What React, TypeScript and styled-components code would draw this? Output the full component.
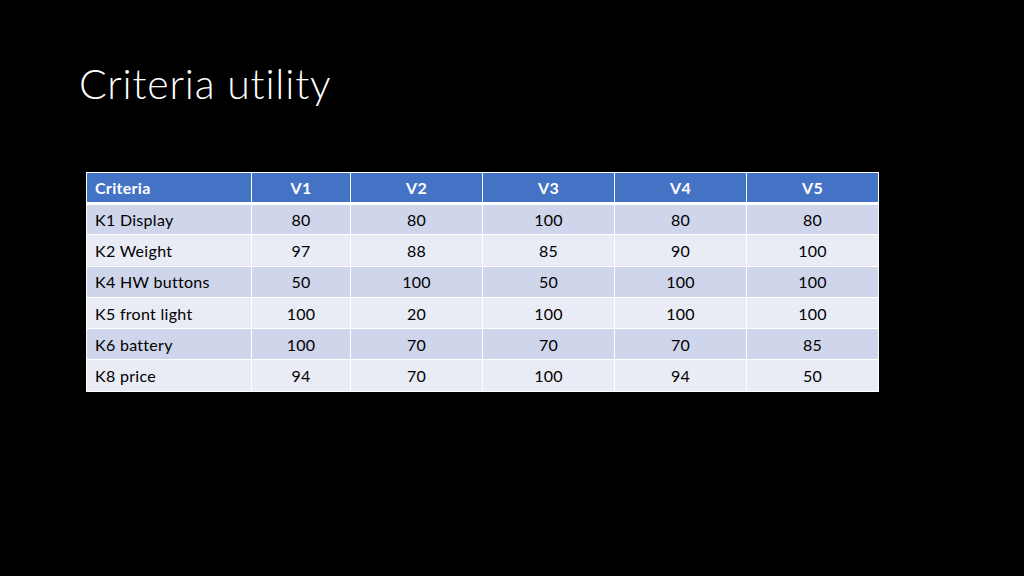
import React from 'react';
import styled, { createGlobalStyle } from 'styled-components';

const GlobalStyle = createGlobalStyle`
  html, body {
    margin: 0;
    padding: 0;
    background: #000;
  }
  body {
    width: 1024px;
    height: 576px;
    overflow: hidden;
    font-family: Lato, "Open Sans", sans-serif;
  }
`;

const Slide = styled.div`
  width: 1024px;
  height: 576px;
  background: #000;
  box-sizing: border-box;
  padding: 58px 0 0 79px;
`;

const Title = styled.h1`
  margin: 0;
  font-family: Lato, sans-serif;
  font-weight: 300;
  font-size: 41px;
  line-height: 52px;
  color: #fff;
  letter-spacing: 0.8px;
`;

const Table = styled.table`
  margin: 62px 0 0 7px;
  border-collapse: collapse;
  font-family: Lato, sans-serif;
  font-size: 16px;
  letter-spacing: 0.3px;
  color: #000;
`;

const HeadCell = styled.th<{ $align?: string; $width: number }>`
  width: ${p => p.$width}px;
  height: 31px;
  box-sizing: border-box;
  padding: 0 8px;
  background: #4472c4;
  color: #fff;
  font-weight: 700;
  text-align: ${p => p.$align || 'center'};
  border: 1px solid #fff;
  border-bottom: 3px solid #fff;
`;

const Row = styled.tr<{ $odd: boolean }>`
  background: ${p => (p.$odd ? '#cfd5ea' : '#e9ebf5')};
`;

const Cell = styled.td<{ $align?: string }>`
  height: 31.3px;
  box-sizing: border-box;
  padding: 0 8px;
  text-align: ${p => p.$align || 'center'};
  border: 1px solid #fff;
`;

const columns = [
  { label: 'Criteria', width: 165, align: 'left' },
  { label: 'V1', width: 99 },
  { label: 'V2', width: 132 },
  { label: 'V3', width: 132 },
  { label: 'V4', width: 132 },
  { label: 'V5', width: 132 },
];

const rows: [string, number[]][] = [
  ['K1 Display', [80, 80, 100, 80, 80]],
  ['K2 Weight', [97, 88, 85, 90, 100]],
  ['K4 HW buttons', [50, 100, 50, 100, 100]],
  ['K5 front light', [100, 20, 100, 100, 100]],
  ['K6 battery', [100, 70, 70, 70, 85]],
  ['K8 price', [94, 70, 100, 94, 50]],
];

const App: React.FC = () => (
  <>
    <GlobalStyle />
    <Slide>
      <Title>Criteria utility</Title>
      <Table>
        <thead>
          <tr>
            {columns.map(c => (
              <HeadCell key={c.label} $width={c.width} $align={c.align}>
                {c.label}
              </HeadCell>
            ))}
          </tr>
        </thead>
        <tbody>
          {rows.map(([name, values], i) => (
            <Row key={name} $odd={i % 2 === 0}>
              <Cell $align="left">{name}</Cell>
              {values.map((v, j) => (
                <Cell key={j}>{v}</Cell>
              ))}
            </Row>
          ))}
        </tbody>
      </Table>
    </Slide>
  </>
);

export default App;
